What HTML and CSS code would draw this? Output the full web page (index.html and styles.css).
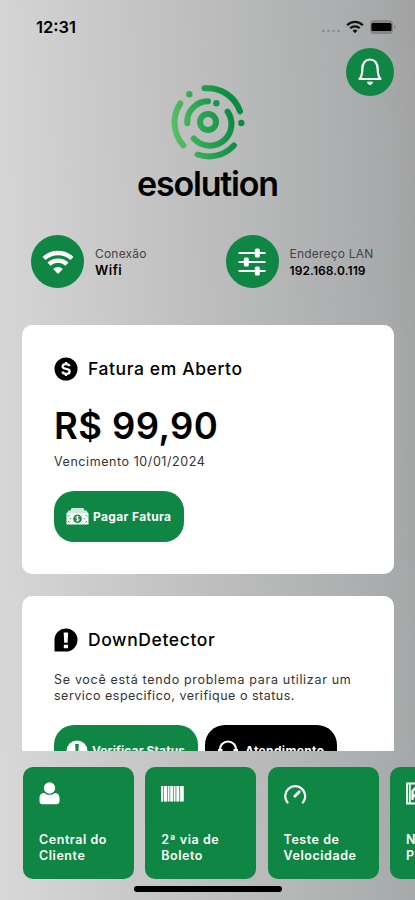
FILE: index.html
```html
<!DOCTYPE html>
<html lang="pt-BR">
<head>
  <meta charset="UTF-8">
  <meta name="viewport" content="width=device-width, initial-scale=1">
  <title>esolution</title>
  <link rel="stylesheet" href="styles.css">
</head>
<body>

  <div class="app">

    <!-- Barra de status -->
    <div class="status-bar">
      <span class="clock">12:31</span>
      <div class="status-icons">
        <svg width="18" height="4" viewBox="0 0 18 4" fill="#8b8b8b">
          <circle cx="1.5" cy="2" r="1.3"/><circle cx="6.5" cy="2" r="1.3"/><circle cx="11.5" cy="2" r="1.3"/><circle cx="16.5" cy="2" r="1.3"/>
        </svg>
        <svg class="status-wifi" width="18" height="14" viewBox="0 0 18 14" fill="none" stroke="#111" stroke-width="2.3">
          <path d="M1.2 5.2a11 11 0 0 1 15.6 0"/>
          <path d="M4.2 8.3a6.8 6.8 0 0 1 9.6 0"/>
          <path d="M9 13.2 6.6 10.7a3.5 3.5 0 0 1 4.8 0z" fill="#111" stroke="none"/>
        </svg>
        <svg class="battery" width="26" height="14" viewBox="0 0 26 14">
          <rect x="0" y="0" width="23" height="14" rx="4" fill="#858585"/>
          <rect x="1.5" y="3" width="20" height="8" rx="1.5" fill="#000"/>
          <path d="M24 4.5c2 .7 2 4.3 0 5z" fill="#858585"/>
        </svg>
      </div>
    </div>

    <!-- Logo e sino -->
    <header class="header">
      <button class="bell" aria-label="Notificações">
        <svg width="26" height="30" viewBox="0 0 26 30" fill="none" stroke="#fff" stroke-width="2.2" stroke-linecap="round" stroke-linejoin="round">
          <path d="M2.500 22c2.500-2.600 2.800-5 2.800-10C5.300 6.200 8.500 2.500 13 2.500s7.700 3.700 7.700 9.500c0 5 .3 7.400 2.800 10z"/>
          <path d="M10.600 25.500c.6 2.800 4.200 2.800 4.800 0z" fill="#fff" stroke-width="1"/>
        </svg>
      </button>
      <svg class="logo-mark" width="76" height="76" viewBox="0 0 76 76" fill="none" stroke="url(#green)" stroke-width="6" stroke-linecap="round">
        <defs>
          <linearGradient id="green" gradientUnits="userSpaceOnUse" x1="2" y1="42" x2="62" y2="30">
            <stop offset="0" stop-color="#58c162"/>
            <stop offset=".5" stop-color="#2aa453"/>
            <stop offset="1" stop-color="#0b8c42"/>
          </linearGradient>
        </defs>
        <circle cx="38" cy="38" r="8"/>
        <path d="M34.500 4.300A34 34 0 0 1 70 27.300"/>
        <path d="M10.300 19.500A34 34 0 0 0 13.200 61.200"/>
        <path d="M27.500 70.500A34 34 0 0 0 63.800 61.500"/>
        <path d="M38 17.200A20.800 20.800 0 0 0 17.200 39.200"/>
        <path d="M57.500 27.600A21.600 21.600 0 0 1 23.800 54.500"/>
        <g fill="url(#green)" stroke="none">
          <circle cx="19.300" cy="10.300" r="3.200"/>
          <circle cx="46.300" cy="19.300" r="3.200"/>
          <circle cx="71.300" cy="39" r="3.200"/>
        </g>
      </svg>
      <div class="logo-name">esolution</div>
    </header>

    <!-- Dados da rede -->
    <section class="network">
      <div class="network-item">
        <div class="round-icon">
          <svg width="32" height="24" viewBox="0 0 32 24" fill="none" stroke="#fff" stroke-width="4.4">
            <path d="M2 8.500a20.500 20.500 0 0 1 28 0"/>
            <path d="M7 14.200a13.200 13.200 0 0 1 18 0"/>
            <path d="M16 24l-4.800-5a7 7 0 0 1 9.600 0z" fill="#fff" stroke="none"/>
          </svg>
        </div>
        <div class="network-text">
          <span class="network-label">Conexão</span>
          <span class="network-value wifi">Wifi</span>
        </div>
      </div>
      <div class="network-item">
        <div class="round-icon">
          <svg width="28" height="28" viewBox="0 0 28 28" fill="#fff">
            <path d="M.5 4h27v2H.5zM.5 13h27v2H.5zM.5 22h27v2H.5z"/>
            <rect x="16.800" y=".5" width="5" height="9" rx="1.500"/>
            <rect x="5.800" y="9.500" width="5" height="9" rx="1.500"/>
            <rect x="16.800" y="18.500" width="5" height="9" rx="1.500"/>
          </svg>
        </div>
        <div class="network-text">
          <span class="network-label">Endereço LAN</span>
          <span class="network-value">192.168.0.119</span>
        </div>
      </div>
    </section>

    <!-- Cartões -->
    <main class="cards">
      <section class="card card-invoice">
        <div class="card-title">
          <svg width="24" height="24" viewBox="0 0 24 24">
            <circle cx="12" cy="12" r="11.500" fill="#000"/>
            <path d="M15.500 9.200C15 7.700 13.700 7.200 12 7.200c-2 0-3.400.9-3.400 2.300 0 3.400 7 1.500 7 4.900 0 1.500-1.500 2.400-3.500 2.400-1.900 0-3.300-.7-3.700-2.200M12 5v2.500M12 16.500V19" fill="none" stroke="#fff" stroke-width="2.300"/>
          </svg>
          <h2>Fatura em Aberto</h2>
        </div>
        <div class="price">R$ 99,90</div>
        <div class="due">Vencimento 10/01/2024</div>
        <button class="btn btn-pay">
          <svg width="23" height="17" viewBox="0 0 23 17">
            <path d="M5.500 0h12l1 2.500h-14zM2.500 2.500h18L22 5H1z" fill="#fff" opacity=".8"/>
            <path d="M.5 5h22v11.500H.5z" fill="#fff"/>
            <circle cx="11.500" cy="10.700" r="4.300" fill="#0f8643"/>
            <path d="M13.300 9.200c-.8-1-3.400-.9-3.400.4 0 1.500 3.300.6 3.300 2.200 0 1.300-2.500 1.400-3.400.3M11.500 7.600v6.200" fill="none" stroke="#fff" stroke-width="1"/>
            <path d="M2 8.500l1.500-1.500M2 13l1.500 1.500M21 8.500L19.500 7M21 13l-1.500 1.500M4 10.700h1M18 10.700h1" stroke="#0f8643" stroke-width="1"/>
          </svg>
          <span>Pagar Fatura</span>
        </button>
      </section>

      <section class="card card-down">
        <div class="card-title">
          <svg width="24" height="24" viewBox="0 0 24 24">
            <path d="M.5 23.500V12A11.500 11.500 0 1 1 12 23.500z" fill="#000"/>
            <path d="M9.700 4.500h4.400l-.5 10.300h-3.400zM9.800 16.700h4.200v3.600H9.800z" fill="#fff"/>
          </svg>
          <h2>DownDetector</h2>
        </div>
        <p class="down-text">Se você está tendo problema para utilizar um<br><span class="tight">servico especifico, verifique o status.</span></p>
        <div class="btn-row">
          <button class="btn btn-status">
            <svg width="22" height="22" viewBox="0 0 22 22">
              <path d="M.5 21.500V11A10.500 10.500 0 1 1 11 21.500z" fill="#fff"/>
              <path d="M9.200 4h3.600l-.5 9.500H9.700zM9.300 15.500h3.400v3H9.300z" fill="#0f8643"/>
            </svg>
            <span>Verificar Status</span>
          </button>
          <button class="btn btn-support">
            <svg width="22" height="22" viewBox="0 0 22 22">
              <path d="M3 13V9.500a8 8 0 0 1 16 0V13" fill="none" stroke="#fff" stroke-width="2.200"/>
              <path d="M1 9h4.500v8H1zM16.500 9H21v8h-4.500z" fill="#fff"/>
              <path d="M19 16c0 3-2 4.500-6 4.500" fill="none" stroke="#fff" stroke-width="1.500"/>
            </svg>
            <span>Atendimento</span>
          </button>
        </div>
      </section>
    </main>

    <!-- Atalhos -->
    <nav class="shortcuts">
      <div class="tile">
        <svg width="24" height="26" viewBox="0 0 24 26" fill="#fff">
          <circle cx="10.500" cy="7" r="5.700"/>
          <path d="M.5 17.500c0-4 2-5.500 4.700-5.500 1.500 1.300 3.300 1.800 5.300 1.800s3.800-.5 5.300-1.800c2.700 0 4.700 1.500 4.700 5.500v2.500c0 2.200-1 3.300-3.300 3.300H3.800c-2.300 0-3.300-1.100-3.300-3.300z"/>
        </svg>
        <span class="tile-text">Central do<br>Cliente</span>
      </div>
      <div class="tile">
        <svg width="24" height="26" viewBox="0 0 24 26" fill="#fff">
          <path d="M0 5h22.700v15.500H0z" opacity=".35"/>
          <path d="M0 5h2v15.500H0zM3 5h3v15.500H3zM7 5h1.300v15.500H7zM9.300 5h2.600v15.500H9.300zM13 5h1.300v15.500H13zM15.500 5h2.500v15.500h-2.500zM19.200 5h3.500v15.500h-3.500z"/>
        </svg>
        <span class="tile-text">2ª via de<br>Boleto</span>
      </div>
      <div class="tile">
        <svg width="24" height="26" viewBox="0 0 24 26" fill="none" stroke="#fff" stroke-width="2.200" stroke-linecap="round">
          <path d="M3.500 21.500A10 10 0 1 1 18.900 21.500"/>
          <path d="M10.800 15.300l4.500-4.500" stroke-width="2.800"/>
        </svg>
        <span class="tile-text">Teste de<br>Velocidade</span>
      </div>
      <div class="tile">
        <svg width="24" height="26" viewBox="0 0 24 26" fill="none" stroke="#fff" stroke-width="1.800">
          <path d="M1 2.500h20.500v20H1zM3.800 2.500v20"/>
          <path d="M6.500 19v-9l5-5 5 5v9M6.500 16l4-3" stroke-width="2.200"/>
        </svg>
        <span class="tile-text">Nossos<br>Planos</span>
      </div>
    </nav>

    <div class="home-indicator"></div>
  </div>

</body>
</html>
```

FILE: styles.css
```css
* {
  box-sizing: border-box;
}

body {
  margin: 0;
  font-family: Inter, "Noto Sans", sans-serif;
  color: #000;
}

button {
  font-family: inherit;
  border: none;
}

svg {
  display: block;
  flex: none;
}

.app {
  width: 415px;
  height: 900px;
  overflow: hidden;
  display: flex;
  flex-direction: column;
  background: linear-gradient(88deg, #d8d8d8 0%, #bebebe 50%, #a8abac 90%, #a2a2a2 100%);
}

/* Barra de status */
.status-bar {
  height: 48px;
  padding: 17px 19px 0 36px;
  display: flex;
  justify-content: space-between;
  align-items: flex-start;
}

.clock {
  font-size: 16.5px;
  line-height: 20px;
  font-weight: 600;
}

.status-icons {
  display: flex;
  align-items: center;
  padding-top: 3px;
}

.status-icons svg:first-child {
  margin-top: 8px;
}

.status-wifi {
  margin: -1px 6px 0 6px;
}

/* Logo */
.header {
  height: 187px;
  display: flex;
  flex-direction: column;
  align-items: center;
}

.bell {
  width: 48px;
  height: 48px;
  padding: 0;
  align-self: flex-end;
  margin-right: 21px;
  border-radius: 50%;
  background: #0f8643;
  display: flex;
  align-items: center;
  justify-content: center;
}

.logo-mark {
  margin-top: -12px;
}

.logo-name {
  margin-top: 4px;
  font-size: 34px;
  line-height: 40px;
  font-weight: 600;
  letter-spacing: -1.2px;
}

/* Rede */
.network {
  height: 90px;
  padding-left: 31px;
  display: flex;
  align-items: flex-start;
}

.network-item {
  width: 194.5px;
  display: flex;
  align-items: center;
  flex: none;
}

.round-icon {
  width: 53px;
  height: 53px;
  margin-right: 11px;
  border-radius: 50%;
  background: #0f8643;
  display: flex;
  align-items: center;
  justify-content: center;
  flex: none;
}

.network-text {
  display: flex;
  flex-direction: column;
  font-size: 12px;
  line-height: 17px;
  white-space: nowrap;
}

.network-label {
  color: #444;
  letter-spacing: 0.2px;
}

.network-value {
  font-weight: 600;
  letter-spacing: 0.1px;
}

.wifi {
  font-size: 13px;
  letter-spacing: 0.5px;
}

/* Cartões */
.cards {
  height: 426px;
  padding: 0 21px 0 22px;
  overflow: hidden;
  flex: none;
}

.card {
  padding: 32px 32px 0;
  background: #fff;
  border-radius: 10px;
}

.card-invoice {
  height: 249px;
  margin-bottom: 22px;
}

.card-down {
  height: 240px;
}

.card-title {
  display: flex;
  align-items: center;
  gap: 10px;
}

.card-title h2 {
  margin: 0;
  font-size: 17.5px;
  line-height: 24px;
  font-weight: 500;
  letter-spacing: 0.6px;
}

.price {
  margin-top: 22px;
  font-size: 36.5px;
  line-height: 46px;
  font-weight: 600;
  letter-spacing: 0.4px;
}

.due {
  margin-top: 4px;
  font-size: 12.5px;
  line-height: 18px;
  letter-spacing: 0.57px;
  color: #333;
}

.btn {
  height: 51px;
  padding: 0 12px;
  display: flex;
  align-items: center;
  border-radius: 20px;
  background: #0f8643;
  color: #fff;
  font-size: 12px;
  font-weight: 700;
  letter-spacing: 0.35px;
  white-space: nowrap;
}

.btn svg {
  margin-right: 4px;
}

.btn-pay {
  width: 130px;
  margin-top: 20px;
}

.btn-row {
  display: flex;
  gap: 7px;
}

.btn-status {
  width: 144px;
  letter-spacing: 0.1px;
}

.btn-support {
  width: 132px;
  background: #000;
}

.btn-support svg {
  margin-right: 6px;
}

.down-text {
  margin: 20px 0 21px;
  font-size: 12.5px;
  line-height: 16px;
  letter-spacing: 0.69px;
  white-space: nowrap;
  color: #333;
}

.tight {
  letter-spacing: 0.5px;
}

/* Atalhos */
.shortcuts {
  margin-top: 16px;
  padding-left: 23px;
  display: flex;
  gap: 11.3px;
  flex: none;
}

.tile {
  width: 111px;
  height: 112px;
  padding: 14px 16px 0;
  display: flex;
  flex-direction: column;
  flex: none;
  border-radius: 10px;
  background: #0f8643;
}

.tile-text {
  margin-top: 25px;
  color: #fff;
  font-size: 12.5px;
  line-height: 16px;
  font-weight: 600;
  letter-spacing: 0.55px;
  white-space: nowrap;
}

.home-indicator {
  width: 148px;
  height: 5.5px;
  margin: 7px auto 0;
  border-radius: 3px;
  background: #000;
  flex: none;
}
```
